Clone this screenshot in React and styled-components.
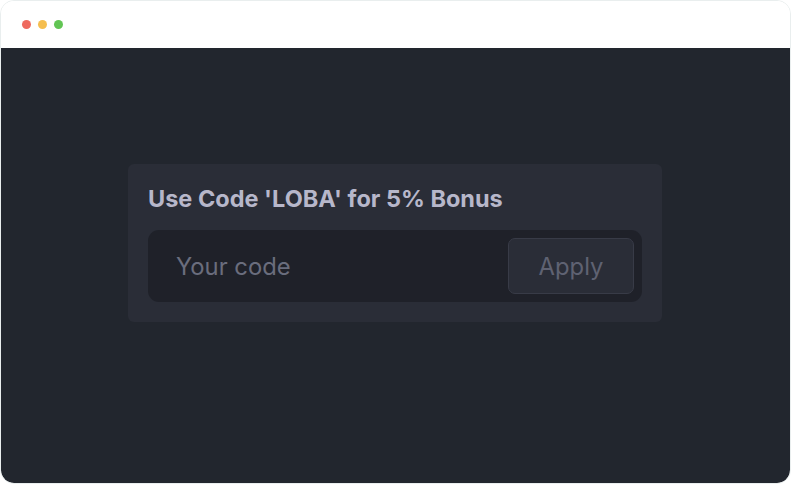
import React from 'react';
import styled, { createGlobalStyle } from 'styled-components';

const GlobalStyle = createGlobalStyle`
    html, body {
        margin: 0;
        padding: 0;
        background: #ffffff;
    }
    body {
        font-family: Inter, "Noto Sans", sans-serif;
    }
`;

const Window = styled.div`
    width: 791px;
    height: 484px;
    box-sizing: border-box;
    border: 1px solid #e9eeee;
    border-radius: 14px;
    overflow: hidden;
    display: flex;
    flex-direction: column;
    background: #ffffff;
`;

const TitleBar = styled.div`
    height: 47px;
    flex-shrink: 0;
    display: flex;
    align-items: center;
    gap: 7px;
    padding-left: 21px;
    background: #ffffff;
`;

const Dot = styled.span`
    width: 9px;
    height: 9px;
    border-radius: 50%;
    background: ${p => p.color};
`;

const Screen = styled.div`
    flex: 1;
    background: #22262e;
    border-radius: 0 0 13px 13px;
    display: flex;
    padding: 116px 0 0 127px;
`;

const Card = styled.div`
    width: 534px;
    height: 158px;
    box-sizing: border-box;
    padding: 20px;
    background: #2a2d37;
    border-radius: 6px;
    display: flex;
    flex-direction: column;
    gap: 17px;
`;

const Title = styled.h2`
    margin: 0;
    font-size: 23.5px;
    line-height: 29px;
    font-weight: 700;
    color: #b7b7ca;
`;

const CodeBox = styled.div`
    height: 72px;
    box-sizing: border-box;
    padding: 8px 8px 8px 28px;
    background: #1f2129;
    border-radius: 11px;
    display: flex;
    align-items: center;
`;

const CodeInput = styled.input`
    flex: 1;
    min-width: 0;
    border: none;
    outline: none;
    background: transparent;
    padding: 0;
    font-family: Inter, "Noto Sans", sans-serif;
    font-size: 23.8px;
    color: #c6c6d4;

    &::placeholder {
        color: #6a6d7d;
    }
`;

const ApplyButton = styled.button`
    width: 126px;
    height: 56px;
    box-sizing: border-box;
    border: 1px solid #383b47;
    border-radius: 7px;
    background: #2a2d37;
    color: #5f6272;
    font-family: Inter, "Noto Sans", sans-serif;
    font-size: 23.8px;
    cursor: pointer;
`;

const App = () => {
    return (
        <>
            <GlobalStyle />
            <Window>
                <TitleBar>
                    <Dot color="#ee6a5f" />
                    <Dot color="#f5be4f" />
                    <Dot color="#62c554" />
                </TitleBar>
                <Screen>
                    <Card>
                        <Title>Use Code 'LOBA' for 5% Bonus</Title>
                        <CodeBox>
                            <CodeInput placeholder="Your code" />
                            <ApplyButton>Apply</ApplyButton>
                        </CodeBox>
                    </Card>
                </Screen>
            </Window>
        </>
    );
};

export default App;
